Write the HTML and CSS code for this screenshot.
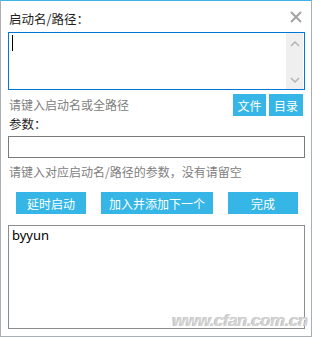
FILE: index.html
```html
<!DOCTYPE html>
<html lang="zh-CN">
<head>
    <meta charset="UTF-8">
    <title>启动名/路径</title>
    <link rel="stylesheet" href="styles.css">
</head>
<body>
    <div class="window">
        <div class="header">
            <span class="label">启动名/路径：</span>
            <svg class="close" width="12" height="12" viewBox="0 0 12 12">
                <path d="M1 1 L11 11 M11 1 L1 11" stroke="#a3a3a3" stroke-width="2" fill="none"/>
            </svg>
        </div>
        <div class="path-box">
            <span class="caret"></span>
            <div class="scrollbar">
                <svg width="10" height="6" viewBox="0 0 10 6">
                    <polyline points="1,5 5,1 9,5" stroke="#b4b4b4" stroke-width="1.5" fill="none"/>
                </svg>
                <svg width="10" height="6" viewBox="0 0 10 6">
                    <polyline points="1,1 5,5 9,1" stroke="#b4b4b4" stroke-width="1.5" fill="none"/>
                </svg>
            </div>
        </div>
        <div class="hint-row">
            <span class="hint">请键入启动名或全路径</span>
            <div class="small-buttons">
                <button class="btn btn-file">文件</button>
                <button class="btn btn-dir">目录</button>
            </div>
        </div>
        <div class="label params-label">参数：</div>
        <div class="params-box"></div>
        <div class="hint hint-params">请键入对应启动名/路径的参数，没有请留空</div>
        <div class="actions">
            <button class="btn btn-delay">延时启动</button>
            <button class="btn btn-add">加入并添加下一个</button>
            <button class="btn btn-done">完成</button>
        </div>
        <div class="output">
            <div class="output-line">byyun</div>
            <span class="watermark">www.cfan.com.cn</span>
        </div>
    </div>
</body>
</html>
```

FILE: styles.css
```css
body {
    margin: 0;
    padding: 0;
    background: #ffffff;
    font-family: "Noto Sans CJK SC", "Noto Sans", sans-serif;
}

.window {
    width: 312px;
    height: 337px;
    box-sizing: border-box;
    border: 1px solid #a7aeb6;
    border-top-color: #3cb4e8;
    padding: 0 6px 0 7px;
    background: #ffffff;
}

.header {
    display: flex;
    justify-content: space-between;
    align-items: center;
    height: 20px;
    margin-top: 8px;
    padding-left: 1px;
    padding-right: 3px;
}

.label {
    font-size: 12.5px;
    line-height: 16px;
    color: #1e1e1e;
}

.close {
    display: block;
    margin-top: -4px;
}

.path-box {
    position: relative;
    height: 58px;
    margin-top: 3px;
    box-sizing: border-box;
    border: 1px solid #0078d7;
    display: flex;
    justify-content: flex-end;
}

.caret {
    position: absolute;
    left: 3px;
    top: 2px;
    width: 1px;
    height: 16px;
    background: #000000;
}

.scrollbar {
    width: 17px;
    background: #efefef;
    display: flex;
    flex-direction: column;
    justify-content: space-between;
    align-items: center;
    padding: 8px 0 6px;
    margin: 0 1px 0 0;
}

.scrollbar svg {
    display: block;
}

.hint-row {
    display: flex;
    justify-content: space-between;
    align-items: center;
    height: 22px;
    margin-top: 4px;
    padding-left: 1px;
    padding-right: 2px;
}

.hint {
    font-size: 12px;
    line-height: 16px;
    color: #808080;
}

.small-buttons {
    display: flex;
    gap: 3px;
}

.btn {
    border: none;
    background: #35b6e6;
    color: #ffffff;
    font-family: "Noto Sans CJK SC", sans-serif;
    font-size: 12px;
    height: 22px;
    padding: 0;
    cursor: pointer;
}

.btn-file {
    width: 33px;
}

.btn-dir {
    width: 34px;
}

.params-label {
    margin-top: 0;
    padding-left: 1px;
}

.params-box {
    height: 22px;
    margin-top: 4px;
    box-sizing: border-box;
    border: 1px solid #7a7a7a;
}

.hint-params {
    margin-top: 6px;
    padding-left: 1px;
}

.actions {
    display: flex;
    gap: 15px;
    margin-top: 12px;
    padding-left: 8px;
}

.btn-delay,
.btn-done {
    width: 70px;
}

.btn-add {
    width: 112px;
}

.output {
    position: relative;
    height: 104px;
    margin-top: 11px;
    box-sizing: border-box;
    border: 1px solid #8a8c90;
    padding: 0 3px;
}

.output-line {
    font-family: "Noto Sans", sans-serif;
    font-size: 13px;
    line-height: 18px;
    color: #000000;
}

.watermark {
    position: absolute;
    right: -4px;
    bottom: -3px;
    font-family: "Liberation Sans", sans-serif;
    font-size: 17px;
    font-weight: bold;
    font-style: italic;
    color: #d2d2d2;
    text-shadow: 1px 1px 0 #ffffff, -1px 0 0 #bdbdbd;
    letter-spacing: -0.5px;
}
```
